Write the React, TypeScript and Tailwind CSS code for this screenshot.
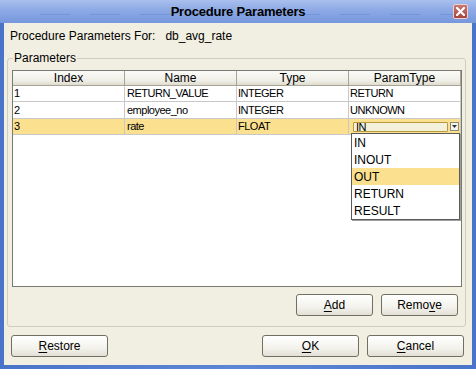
import React from "react";

const rows = [
  { idx: "1", name: "RETURN_VALUE", type: "INTEGER", p: "RETURN" },
  { idx: "2", name: "employee_no", type: "INTEGER", p: "UNKNOWN" },
  { idx: "3", name: "rate", type: "FLOAT", p: "IN" },
];
const heights = ["h-[16px]", "h-[17px]", "h-[16px]"];

function Btn({ label, u, w }: { label: string; u: number; w: string }) {
  return (
    <div
      className={`${w} h-[22px] rounded-[3px] border border-[#6f6f62] bg-[linear-gradient(to_bottom,#ffffff,#f3f2ec_60%,#e2e0d6)] flex items-center justify-center text-[12px] text-black`}
    >
      <span>
        {label.slice(0, u)}
        <span className="underline underline-offset-2">{label[u]}</span>
        {label.slice(u + 1)}
      </span>
    </div>
  );
}

export default function App() {
  return (
    <div className="w-[476px] h-[369px] flex flex-col bg-[linear-gradient(to_right,#4a74c9,#5d86d6_50%,#4a74c9)] font-['Liberation_Sans',Arial,sans-serif] text-black overflow-hidden">
      {/* Title bar */}
      <div className="relative h-[23px] shrink-0 flex items-center justify-center bg-[linear-gradient(to_bottom,#a9c0ee,#8fabe6_40%,#7597dc)]">
        <div className="absolute inset-x-[20px] top-[6px] h-[1px] bg-[repeating-linear-gradient(to_right,transparent_0px,transparent_30px,#9ab3e6_30px,#9ab3e6_55px)] opacity-70" />
        <div className="absolute inset-x-[20px] top-[14px] h-[1px] bg-[repeating-linear-gradient(to_right,transparent_0px,transparent_20px,#6a8fd6_20px,#6a8fd6_50px)] opacity-70" />
        <span className="relative text-[13px] font-bold tracking-[-0.2px] text-black">Procedure Parameters</span>
        <div className="absolute right-[8px] top-[4px] w-[15px] h-[15px] rounded-[2px] border border-[#e8d0d0] bg-[linear-gradient(to_bottom,#c97a72,#a8443e)] flex items-center justify-center">
          <svg width="9" height="9" viewBox="0 0 9 9">
            <path d="M1 1 L8 8 M8 1 L1 8" stroke="#ffffff" strokeWidth="2.2" strokeLinecap="square" />
          </svg>
        </div>
      </div>

      {/* Content */}
      <div className="flex-1 mx-[4px] mb-[4px] bg-[#f1efe2] flex flex-col">
        <div className="h-[14px] mt-[6px] ml-[6px] flex items-center text-[12px] leading-[14px]">
          <span>Procedure Parameters For:</span>
          <span className="ml-[10px]">db_avg_rate</span>
        </div>

        {/* Fieldset */}
        <div className="relative mt-[15px] ml-[3px] mr-[6px] h-[269px] border border-[#d0cebf] rounded-[3px] flex flex-col">
          <div className="absolute left-[5px] top-[-8px] px-[1px] bg-[#f1efe2] text-[12px] leading-[14px]">
            Parameters
          </div>

          {/* Table */}
          <div className="relative mt-[11px] ml-[4px] mr-[3px] h-[217px] border border-[#7a7a72] bg-white">
            <div className="grid grid-cols-[112px_112px_112px_112px]">
              {["Index", "Name", "Type", "ParamType"].map((h) => (
                <div
                  key={h}
                  className="h-[15px] border-r border-b border-[#a8a596] bg-[linear-gradient(to_bottom,#fbfbf8,#efeee6_70%,#dedccf)] text-[12px] leading-[14px] text-center"
                >
                  {h}
                </div>
              ))}
              {rows.map((r, i) => {
                const sel = i === 2;
                const bg = sel ? "bg-[#fbe08f]" : "bg-white";
                const cell = `${heights[i]} ${bg} border-r border-b border-[#c8c8c8] text-[11px] tracking-[-0.5px] flex items-center pl-[1px] whitespace-nowrap overflow-hidden`;
                return (
                  <React.Fragment key={r.idx}>
                    <div className={cell}>{r.idx}</div>
                    <div className={`${cell} pl-[2px]`}>{r.name}</div>
                    <div className={cell}>{r.type}</div>
                    {sel ? (
                      <div className={`${heights[i]} ${bg} border-r border-b border-[#c8c8c8] flex items-center pl-[4px] pr-[1px]`}>
                        <div className="flex-1 h-[10px] border border-[#b89a3c] rounded-[1px] bg-[#f3f0dc] text-[11px] leading-[8px] pl-[2px] tracking-[-0.5px]">
                          IN
                        </div>
                        <div className="ml-[2px] w-[9px] h-[9px] border border-[#8a8a80] bg-[#f4f3ee] flex items-center justify-center">
                          <svg width="5" height="3" viewBox="0 0 5 3">
                            <path d="M0 0 H5 L2.5 3 Z" fill="#333" />
                          </svg>
                        </div>
                      </div>
                    ) : (
                      <div className={cell}>{r.p}</div>
                    )}
                  </React.Fragment>
                );
              })}
            </div>

            {/* Dropdown list */}
            <div className="absolute left-[338px] top-[62px] w-[109px] h-[87px] border border-[#5a5a5a] bg-white shadow-[1px_1px_0_#a0a0a0] flex flex-col">
              {["IN", "INOUT", "OUT", "RETURN", "RESULT"].map((t) => (
                <div
                  key={t}
                  className={`h-[17px] flex items-center pl-[2px] text-[12px] ${t === "OUT" ? "bg-[#fbe08f]" : ""}`}
                >
                  {t}
                </div>
              ))}
            </div>
          </div>

          <div className="mt-[7px] mr-[7px] flex justify-end gap-[8px]">
            <Btn label="Add" u={0} w="w-[77px]" />
            <Btn label="Remove" u={4} w="w-[77px]" />
          </div>
        </div>

        {/* Bottom buttons */}
        <div className="mt-[8px] ml-[7px] mr-[8px] flex">
          <Btn label="Restore" u={0} w="w-[97px]" />
          <div className="flex-1" />
          <Btn label="OK" u={0} w="w-[97px]" />
          <div className="w-[8px]" />
          <Btn label="Cancel" u={0} w="w-[97px]" />
        </div>
      </div>
    </div>
  );
}
